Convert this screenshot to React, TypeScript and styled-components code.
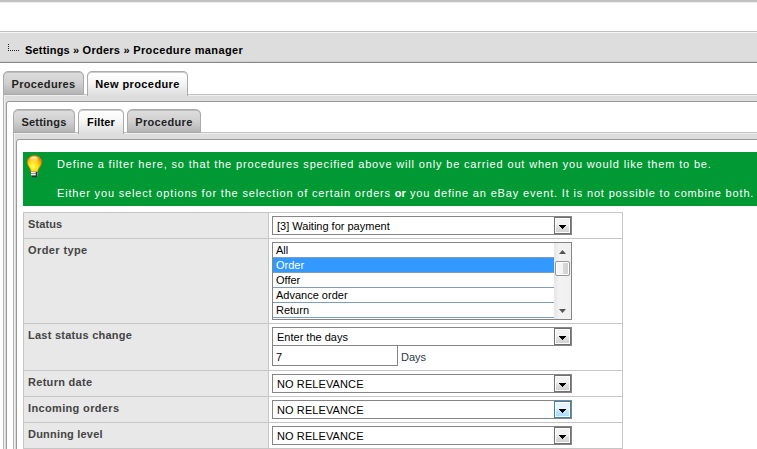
import React from "react";
import styled, { createGlobalStyle } from "styled-components";

const Global = createGlobalStyle`
  * { box-sizing: border-box; }
  body { margin: 0; background: #fff; overflow: hidden; font: 11px/15px "Liberation Sans", Arial, sans-serif; color: #000; }
`;

const Page = styled.div`
  width: 757px;
  height: 449px;
  overflow: hidden;
`;

const TopStrip = styled.div`
  height: 31px;
  border-top: 2px solid #c2c2c2;
  box-shadow: inset 0 1px #eee;
`;

const Breadcrumb = styled.header`
  display: flex;
  align-items: center;
  height: 32px;
  padding: 6px 0 0 8px;
  border-top: 1px solid #bebebe;
  border-bottom: 1px solid #888;
  background: #ddd;
  box-shadow: inset 0 1px #f6f6f6, inset 0 -1px #cfcfcf;
  font-weight: bold;
  white-space: pre;
  svg { margin: -4px 6px 0 0; }
`;

const Text = styled.span<{ $spacing?: number }>`
  letter-spacing: ${(p) => p.$spacing ?? 0}px;
  white-space: pre;
`;

const Tabs = styled.nav`
  display: flex;
  position: relative;
  gap: 3px;
  height: 23px;
`;

const Tab = styled.div<{ $width: number; $active?: boolean }>`
  width: ${(p) => p.$width}px;
  height: ${(p) => (p.$active ? 25 : 24)}px;
  padding-top: 5px;
  text-align: center;
  font-weight: bold;
  color: ${(p) => (p.$active ? "#000" : "#222")};
  border: 1px solid #aaa;
  border-bottom: ${(p) => (p.$active ? "0" : "1px solid #aaa")};
  border-radius: 5px 5px 0 0;
  box-shadow: inset 0 1px ${(p) => (p.$active ? "#ccc" : "#bbb")};
  background: ${(p) =>
    p.$active
      ? "linear-gradient(#fff, #f6f6f6 45%, #ddd)"
      : "linear-gradient(#dedede, #d0d0d0 50%, #b4b4b4)"};
`;

const Frame = styled.section`
  margin-right: -10px;
  padding: 6px 0 0 2px;
  height: 500px;
  border-left: 1px solid #b4b4b4;
  border-top: 1px solid #c3c3c3;
  background: #ddd;
  box-shadow: inset 1px 1px #eee;
`;

const Sheet = styled.div<{ $pad: string }>`
  height: 100%;
  padding: ${(p) => p.$pad};
  border: 1px solid #999;
  border-radius: 3px 0 0 0;
  background: #fff;
`;

const Outer = styled.main`
  padding: 8px 0 0 3px;
`;

const Notice = styled.div`
  display: flex;
  width: 760px;
  height: 54px;
  background: #093;
  color: #fff;
  padding: 3px 0 0 3px;
  gap: 14px;
  svg { flex: none; }
`;

const NoticeText = styled.div`
  display: flex;
  flex-direction: column;
  gap: 14px;
  padding-top: 2px;
  b { letter-spacing: 0.1px; }
`;

const Form = styled.div`
  width: 600px;
  margin-top: 6px;
  border: 1px solid #c6c6c6;
  border-bottom: 0;
`;

const Row = styled.div<{ $height: number }>`
  display: grid;
  grid-template-columns: 245px 1fr;
  height: ${(p) => p.$height}px;
  border-bottom: 1px solid #c6c6c6;
`;

const Label = styled.div`
  padding: 4px 0 0 4px;
  border-right: 1px solid #c6c6c6;
  background: #e8e8e8;
  color: #444;
  font-weight: bold;
`;

const Cell = styled.div`
  padding: 3px;
`;

const Select = styled.div`
  display: flex;
  justify-content: space-between;
  width: 300px;
  height: 19px;
  border: 1px solid #858585;
  padding-left: 4px;
  line-height: 19px;
`;

const Arrow = styled.div<{ $hot?: boolean }>`
  display: grid;
  place-items: center;
  width: 17px;
  height: 17px;
  padding-top: 3px;
  border: 1px solid ${(p) => (p.$hot ? "#3c7fb1" : "#707070")};
  box-shadow: inset 0 0 0 1px #fff;
  background: ${(p) =>
    p.$hot
      ? "linear-gradient(#e5f5fd 45%, #c4e8fb 55%, #a7d9f5)"
      : "linear-gradient(#f2f2f2 45%, #e2e2e2 55%, #cfcfcf)"};
`;

const ListBox = styled.div`
  display: flex;
  width: 300px;
  height: 78px;
  border: 1px solid #858585;
`;

const Options = styled.div`
  width: 281px;
`;

const Option = styled.div<{ $selected?: boolean }>`
  height: 15px;
  padding-left: 3px;
  border-bottom: 1px solid #7f9db9;
  background: ${(p) => (p.$selected ? "#39f" : "#fff")};
  color: ${(p) => (p.$selected ? "#fff" : "#000")};
  line-height: 15px;
`;

const Scroll = styled.div`
  display: flex;
  flex-direction: column;
  justify-content: space-between;
  align-items: center;
  width: 17px;
  padding: 7px 0 6px;
  background: linear-gradient(90deg, #e6e6e6, #f2f2f2 30%, #f0f0f0);
`;

const Thumb = styled.div`
  width: 15px;
  height: 15px;
  margin: 7px 0 auto;
  border: 1px solid #979797;
  border-radius: 2px;
  box-shadow: inset 0 0 0 1px #fff;
  background: linear-gradient(90deg, #f5f5f5 50%, #d8d8dc 50%, #cfcfd4);
`;

const InputLine = styled.div`
  display: flex;
  gap: 3px;
  height: 20px;
  color: #2b3b4b;
  line-height: 22px;
`;

const Input = styled.div`
  width: 126px;
  height: 21px;
  margin-top: -1px;
  padding-left: 3px;
  border: 1px solid #858585;
  color: #000;
`;

const Down = () => (
  <svg width="7" height="4" shapeRendering="crispEdges">
    <path d="M0 0h7v1h-1v1h-1v1h-1v1h-1v-1h-1v-1h-1v-1h-1z" />
  </svg>
);

const Bulb = () => (
  <svg width="17" height="23" viewBox="0 0 17 23">
    <defs>
      <radialGradient id="glow" cx="42%" cy="65%" r="62%">
        <stop offset="0" stopColor="#ffff50" />
        <stop offset=".5" stopColor="#ffdc18" />
        <stop offset="1" stopColor="#f08a00" />
      </radialGradient>
      <linearGradient id="shine" x2="0" y2="1">
        <stop stopColor="#fffbe0" />
        <stop offset="1" stopColor="#ffe680" stopOpacity="0" />
      </linearGradient>
    </defs>
    <path d="M8.5.5C4.300.5 1.300 3.400 1.300 7.200c0 4 3.500 5.500 3.800 9.800h6.600c.3-4.300 3.900-5.800 3.900-9.800C15.600 3.400 12.700.5 8.500.5z" fill="url(#glow)" stroke="#e07a00" strokeWidth=".6" />
    <ellipse cx="8" cy="4.500" rx="4" ry="3" fill="url(#shine)" />
    <path d="M5 16.500h7v4l-1.500 1.500h-4L5 20.500z" fill="#999" />
    <path d="M5 17.500h5M5 19.500h5" stroke="#eee" />
    <path d="M10.500 17v4M6 21.500h5" stroke="#333" strokeWidth="1.500" />
  </svg>
);

const Dropdown = ({ text, hot, spacing }: { text: string; hot?: boolean; spacing?: number }) => (
  <Select>
    <Text $spacing={spacing}>{text}</Text>
    <Arrow $hot={hot}><Down /></Arrow>
  </Select>
);

const options = ["All", "Order", "Offer", "Advance order", "Return"];

export default function App() {
  return (
    <Page>
      <Global />
      <TopStrip />
      <Breadcrumb>
        <svg width="11" height="8" shapeRendering="crispEdges">
          <path d="M.5 0v7M0 6.500h11" stroke="#222" strokeDasharray="1 1" fill="none" />
        </svg>
        <Text $spacing={0.18}>Settings » </Text>
        <Text $spacing={0.25}>Orders » </Text>
        <Text $spacing={0.4}>Procedure manager</Text>
      </Breadcrumb>
      <Outer>
        <Tabs>
          <Tab $width={81}><Text $spacing={0.35}>Procedures</Text></Tab>
          <Tab $width={101} $active><Text $spacing={0.4}>New procedure</Text></Tab>
        </Tabs>
        <Frame>
          <Sheet $pad="7px 0 0 6px">
            <Tabs>
              <Tab $width={62}><Text $spacing={0.22}>Settings</Text></Tab>
              <Tab $width={46} $active><Text $spacing={0.15}>Filter</Text></Tab>
              <Tab $width={74}><Text $spacing={0.33}>Procedure</Text></Tab>
            </Tabs>
            <Frame>
              <Sheet $pad="12px 0 0 6px">
                <Notice>
                  <Bulb />
                  <NoticeText>
                    <Text $spacing={0.84}>Define a filter here, so that the procedures specified above will only be carried out when you would like them to be.</Text>
                    <Text $spacing={0.833}>Either you select options for the selection of certain orders <b>or</b> you define an eBay event. It is not possible to combine both.</Text>
                  </NoticeText>
                </Notice>
                <Form>
                  <Row $height={26}>
                    <Label><Text $spacing={0.1}>Status</Text></Label>
                    <Cell><Dropdown text="[3] Waiting for payment" /></Cell>
                  </Row>
                  <Row $height={85}>
                    <Label><Text $spacing={0.4}>Order type</Text></Label>
                    <Cell>
                      <ListBox>
                        <Options>
                          {options.map((o) => (
                            <Option key={o} $selected={o === "Order"}>{o}</Option>
                          ))}
                        </Options>
                        <Scroll>
                          <svg width="7" height="4"><path d="M0 4L3.500 0L7 4z" fill="#555" /></svg>
                          <Thumb />
                          <svg width="7" height="4"><path d="M0 0L3.500 4L7 0z" fill="#555" /></svg>
                        </Scroll>
                      </ListBox>
                    </Cell>
                  </Row>
                  <Row $height={47}>
                    <Label><Text $spacing={0.25}>Last status change</Text></Label>
                    <Cell>
                      <Dropdown text="Enter the days" />
                      <InputLine><Input>7</Input><Text>Days</Text></InputLine>
                    </Cell>
                  </Row>
                  <Row $height={26}>
                    <Label><Text $spacing={0.3}>Return date</Text></Label>
                    <Cell><Dropdown text="NO RELEVANCE" spacing={0.1} /></Cell>
                  </Row>
                  <Row $height={26}>
                    <Label><Text $spacing={0.35}>Incoming orders</Text></Label>
                    <Cell><Dropdown text="NO RELEVANCE" spacing={0.1} hot /></Cell>
                  </Row>
                  <Row $height={26}>
                    <Label><Text $spacing={0.2}>Dunning level</Text></Label>
                    <Cell><Dropdown text="NO RELEVANCE" spacing={0.1} /></Cell>
                  </Row>
                </Form>
              </Sheet>
            </Frame>
          </Sheet>
        </Frame>
      </Outer>
    </Page>
  );
}
